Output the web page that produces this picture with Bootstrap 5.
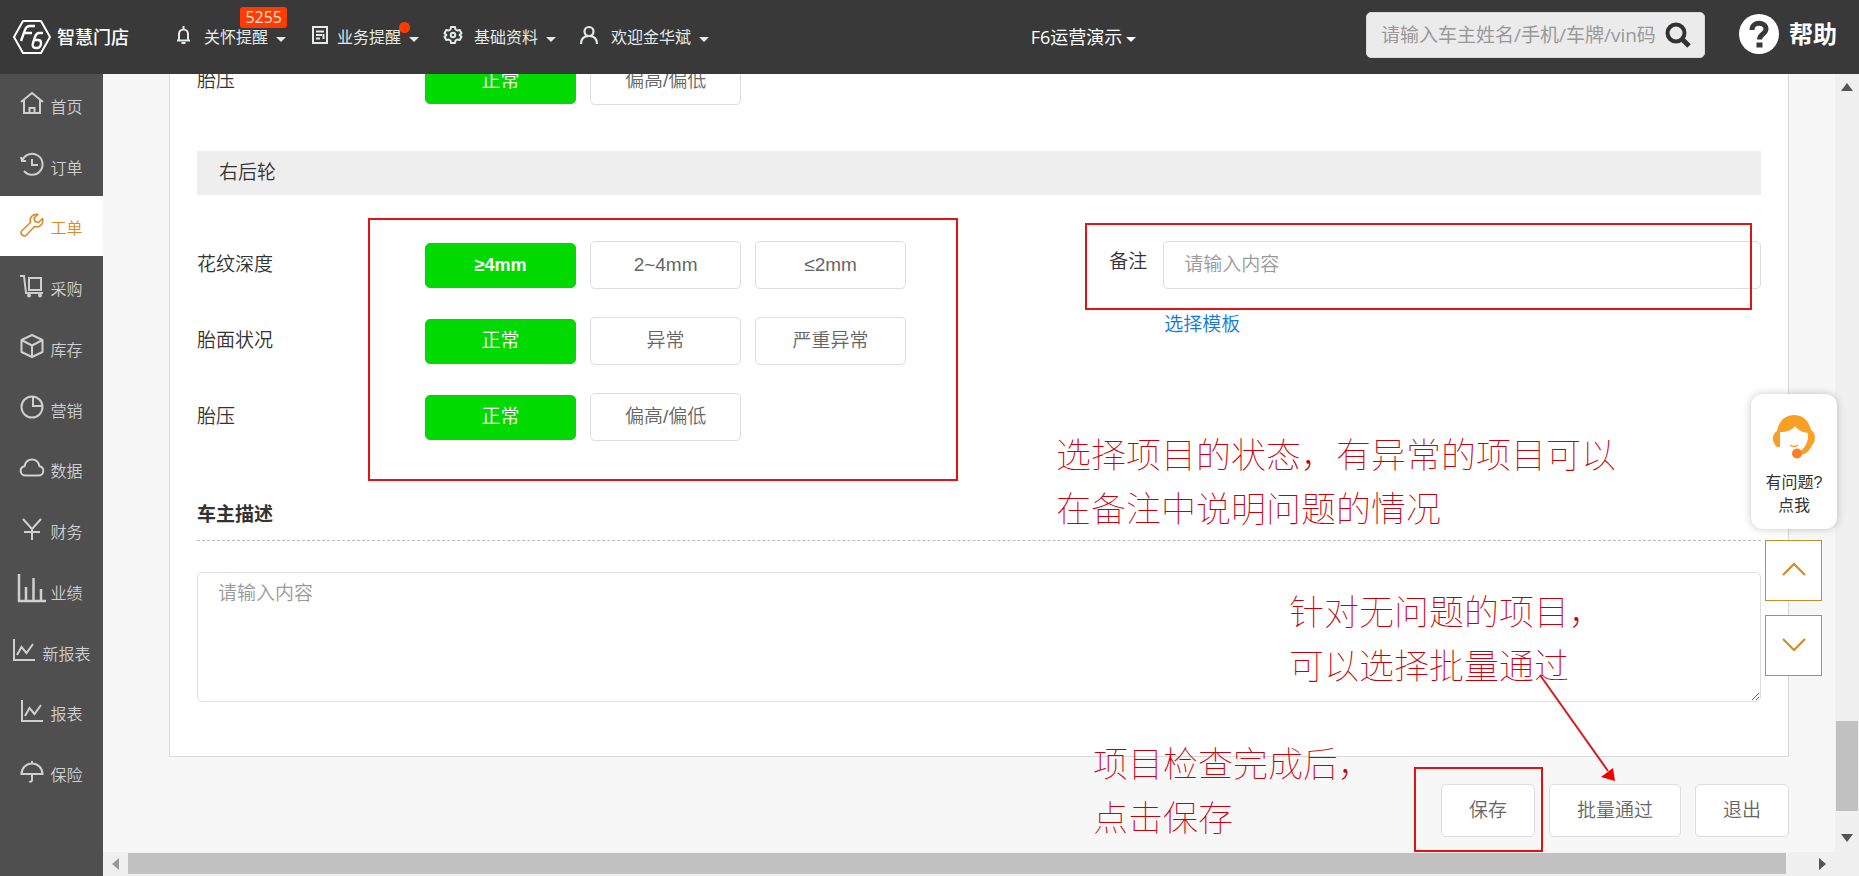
<!DOCTYPE html>
<html lang="zh-CN">
<head>
<meta charset="utf-8">
<meta name="viewport" content="width=device-width, initial-scale=1">
<title>智慧门店 - 工单</title>
<link rel="stylesheet" href="https://cdn.jsdelivr.net/npm/bootstrap@5.3.0/dist/css/bootstrap.min.css">
<style>
  body { font-family: "Liberation Sans", "Noto Sans CJK SC", sans-serif; font-size: 19px; font-weight: 350; line-height: 28px; color: #333; background: #f7f7f7; }
  input, textarea, button, .btn { font-weight: 350; }
  svg { fill: none; stroke: currentColor; overflow: visible; flex: none; }

  /* top bar */
  .topbar { height: 74px; background: #393939; color: #fff; font-family: "Open Sans", "Noto Sans CJK SC", sans-serif; font-weight: 400; padding: 0 22px 0 13px; }
  .brand { width: 162px; font-size: 18px; font-weight: 500; gap: 6px; }
  .topmenu { font-size: 16px; line-height: 24px; color: #e3ebe8; }
  .topmenu a, .shop a { color: inherit; text-decoration: none; }
  .topmenu a { margin-right: 26px; }
  .topmenu a:last-child { margin-right: 0; }
  .topmenu .ico { margin: 0 9px 4px 0; }
  .drop-caret { border: 5px solid transparent; border-top-color: currentColor; border-bottom: 0; margin: 4px 0 0 8px; }
  .shop { font-size: 18px; padding-left: 92px; }
  .shop .drop-caret { margin-left: 4px; }
  .count-tag { position: absolute; right: -1px; top: -18px; height: 21px; padding: 0 5px; border-radius: 3px; background: #ff3c00; font-size: 16px; line-height: 21px; color: #ffe3d8; }
  .dot-tag { position: absolute; right: 9px; top: -3px; width: 11px; height: 11px; border-radius: 50%; background: #ff3c00; }
  .searchbox { width: 339px; height: 46px; background: #ebebeb; border: 1px solid #d8d8d8; border-radius: 5px; padding: 0 13px 0 14px; margin-right: 34px; }
  .searchbox input { font-size: 19px; font-weight: 400; color: #333; outline: 0; min-width: 0; }
  .searchbox input::placeholder { color: #999; opacity: 1; }
  .searchbox button { color: #333; }
  .help { font-size: 24px; color: #fff; gap: 10px; padding-bottom: 6px; }

  /* side menu */
  .side { width: 103px; background: #4f4f4f; padding-bottom: 73px; }
  .side a { gap: 6px; padding: 7px 0 0; color: #cfcfcf; font-size: 16px; line-height: 24px; text-decoration: none; }
  .side svg { width: 24px; height: 24px; stroke-width: 2; margin-bottom: 9px; }
  .side a.active { background: #fff; color: #dd8a26; }

  /* form */
  .sheet { background: #fff; border: 1px solid #d9d9d9; padding: 0 27px 54px; margin: 0 46px 0 66px; }
  .group-bar { background: #eee; line-height: 44px; height: 44px; padding-left: 22px; margin: 46px 0; }
  .lines { gap: 28px; }
  .opts { gap: 14px; }
  .opt, .act { font-size: 19px; line-height: 28px; color: #666; background: #fff; border: 1px solid #ddd; border-radius: 5px; }
  .opt { width: 151px; height: 48px; padding: 9px 0; }
  .btn-check:checked + .opt { height: 45px; padding: 7px 0; background: #00da00; border-color: #00da00; color: #fff; }
  .opt.strong { font-weight: 700; font-size: 18px; }
  .act { height: 53px; padding: 0 27px; }
  .acts { gap: 14px; padding: 27px 46px 15px 0; }
  .note-label { width: 54px; padding-top: 7px; }
  .field { font-size: 19px; line-height: 28px; border: 1px solid #ddd; border-radius: 5px; padding: 9px 20px; color: #333; }
  .field::placeholder { color: #999; opacity: 1; }
  textarea.field { height: 130px; padding-top: 7px; margin-top: 31px; }
  .tpl { color: #1479d7; text-decoration: none; margin: 22px 0 0 55px; }
  .sub-title { font-size: 19px; line-height: 28px; font-weight: 700; margin: 60px 0 0; padding-bottom: 11px; border-bottom: 1px dashed #bbb; }

  /* scroll bars of the inner frame */
  .vbar { width: 24px; background: #f0f0f0; padding: 9px 1px 10px; }
  .vbar i { width: 22px; height: 90px; background: #c1c1c1; margin-bottom: 23px; }
  .hbar { height: 24px; background: #f0f0f0; padding: 0 33px 0 9px; gap: 9px; }
  .hbar i { height: 21px; background: #c1c1c1; margin-right: 24px; margin-bottom: 1px; }
  .tri { fill: #555; stroke: none; }

  /* floating tools */
  .support { position: absolute; right: 22px; bottom: 347px; width: 86px; height: 135px; border-radius: 12px; background: #fff; box-shadow: 0 0 8px rgba(0,0,0,.22); font-size: 16px; font-weight: 400; line-height: 23px; color: #333; text-decoration: none; padding-bottom: 12px; }
  .jump { position: absolute; right: 37px; bottom: 200px; gap: 14px; }
  .jump button { width: 57px; height: 61px; padding: 0 0 4px; background: #fff; border: 1px solid #c58d22; color: #cf8a22; }

  /* tutorial marks drawn over the page */
  .frame-mark { position: absolute; border: 2px solid #e11414; pointer-events: none; }
  .m-opts { left: 265px; bottom: 395px; width: 590px; height: 263px; }
  .m-note { right: 107px; bottom: 566px; width: 667px; height: 87px; }
  .m-save { right: 316px; bottom: 24px; width: 129px; height: 85px; }
  .tip-text { position: absolute; margin: 0; font-family: "Noto Sans CJK SC", sans-serif; font-weight: 100; font-size: 35px; line-height: 54px; color: #c4000c; white-space: nowrap; pointer-events: none; }
  .t-state { right: 233px; bottom: 342px; width: 570px; }
  .t-batch { right: 260px; bottom: 185px; width: 310px; }
  .t-save { right: 486px; bottom: 33px; width: 280px; }
  .arrow-mark { position: absolute; right: 239px; bottom: 91px; pointer-events: none; }
</style>
</head>
<body class="vh-100 d-flex flex-column overflow-hidden">

<header class="topbar d-flex align-items-center flex-shrink-0">
  <div class="brand d-flex align-items-center flex-shrink-0">
    <svg width="38" height="34" viewBox="0 0 38 34" stroke-width="2" stroke-linejoin="round" aria-hidden="true">
      <path d="M10 1h18l9 16-9 16H10L1 17z"/>
      <path d="M22 6h-5c-3 0-4 1-5 4L8 21M12 13h7M30 13h-4c-2 0-3 1-4 4l-2 6c-1 3 0 5 3 5h1c3 0 4-3 4-5s-1-3-3-3h-4" stroke-width="2.4"/>
    </svg>
    <span>智慧门店</span>
  </div>
  <nav class="topmenu d-flex align-items-center flex-shrink-0">
    <a href="#" class="d-flex align-items-center position-relative">
      <svg class="ico" width="20" height="18" viewBox="-1 0 20 18" stroke-width="2"><path d="M1 14.500h13M3 14V8a4.500 4.500 0 0 1 9 0v6M7.500 3V0M5.500 17h4"/></svg>
      <span>关怀提醒</span><span class="drop-caret"></span><span class="count-tag">5255</span>
    </a>
    <a href="#" class="d-flex align-items-center position-relative">
      <svg class="ico" width="16" height="18" viewBox="0 0 16 18" stroke-width="2"><path d="M1 1h14v16H1zM4 5.500h8M4 9h6M4 12.500h4M11.500 8v5"/></svg>
      <span>业务提醒</span><span class="drop-caret"></span><span class="dot-tag"></span>
    </a>
    <a href="#" class="d-flex align-items-center">
      <svg class="ico" width="20" height="18" viewBox="1 0 20 18" stroke-width="2" stroke-linejoin="round"><path d="M7 1h4l.5 2.500 1.700 1L15.700 4l1.800 3.200L15.600 9l1.900 1.800-1.800 3.200-2.500-.5-1.700 1L11 17H7l-.5-2.500-1.700-1-2.500.5L.5 10.800 2.400 9 .5 7.200 2.300 4l2.500.5 1.700-1z"/><circle cx="9" cy="9" r="2.200"/></svg>
      <span>基础资料</span><span class="drop-caret"></span>
    </a>
    <a href="#" class="d-flex align-items-center">
      <svg class="ico" width="20" height="18" viewBox="1 0 20 18" stroke-width="2.200"><circle cx="8" cy="5.500" r="4.500"/><path d="M0 18c0-5 3-8 8-8s8 3 8 8"/></svg>
      <span>欢迎金华斌</span><span class="drop-caret"></span>
    </a>
  </nav>
  <div class="shop flex-fill d-flex justify-content-center"><a href="#" class="d-flex align-items-center">F6运营演示<span class="drop-caret"></span></a></div>
  <form class="searchbox d-flex align-items-center flex-shrink-0 mb-1">
    <input type="text" class="border-0 bg-transparent p-0 flex-fill" placeholder="请输入车主姓名/手机/车牌/vin码" aria-label="搜索">
    <button type="button" class="border-0 bg-transparent p-0 d-flex" aria-label="查询">
      <svg width="26" height="26" viewBox="0 0 26 26" stroke-width="4"><circle cx="11" cy="11" r="8.500"/><path d="M17 17l7 7" stroke-width="5"/></svg>
    </button>
  </form>
  <a href="#" class="help d-flex align-items-center fw-bold text-decoration-none flex-shrink-0">
    <svg width="40" height="40" viewBox="0 0 40 40"><circle cx="20" cy="20" r="20" fill="#fff" stroke="none"/><path d="M13 16c0-9 14-8.500 14-1 0 5-6.500 5-6.500 10.500" stroke="#393939" stroke-width="5"/><path d="M17.500 28.500h6v5h-6z" fill="#393939" stroke="none"/></svg>
    <span>帮助</span>
  </a>
</header>

<div class="d-flex flex-fill overflow-hidden">
  <nav class="side d-flex flex-column flex-shrink-0">
    <a href="#" class="d-flex flex-fill align-items-center justify-content-center"><svg viewBox="0 0 24 24"><path d="M1 11L12 2l11 9M4 9v13h16V9M9.500 22v-5h5v5"/></svg>首页</a>
    <a href="#" class="d-flex flex-fill align-items-center justify-content-center"><svg viewBox="0 0 24 24"><path d="M2.500 8A10.500 10.500 0 1 1 4 19M1 5l1 4h4M12 7v6h6"/></svg>订单</a>
    <a href="#" class="active d-flex flex-fill align-items-center justify-content-center"><svg viewBox="0 0 24 24" stroke-linejoin="round"><path stroke-width="1.600" d="M18 1.500c-5-1-9 3-7.500 8L1.500 18c-1.500 3 1.500 6 4.500 4.500l8.500-9c5 1.500 9.500-2.500 8-8l-4 4-3.500-1-1-3.500z"/></svg>工单</a>
    <a href="#" class="d-flex flex-fill align-items-center justify-content-center"><svg viewBox="0 0 24 24"><path d="M0 2h4l2 17h17M9 4h12v12H9z"/><circle cx="9" cy="21.500" r="1"/><circle cx="20" cy="21.500" r="1"/></svg>采购</a>
    <a href="#" class="d-flex flex-fill align-items-center justify-content-center"><svg viewBox="0 0 24 24" stroke-linejoin="round"><path d="M12 1l10.500 5v12L12 23 1.500 18V6zM1.500 6L12 11.500 22.500 6M12 11.500V23"/></svg>库存</a>
    <a href="#" class="d-flex flex-fill align-items-center justify-content-center"><svg viewBox="0 0 24 24"><circle cx="12" cy="12" r="10.500"/><path d="M13 2v9h9"/></svg>营销</a>
    <a href="#" class="d-flex flex-fill align-items-center justify-content-center"><svg viewBox="0 0 24 24"><path d="M5 19.500a4.700 4.700 0 0 1-.5-9.300C5.500 6 8.500 3.500 12 3.500s6.500 2.500 7.500 6.700a4.700 4.700 0 0 1-.5 9.300z"/></svg>数据</a>
    <a href="#" class="d-flex flex-fill align-items-center justify-content-center"><svg viewBox="0 0 24 24"><path d="M3 2l9 10 9-10M12 12v11M4 15h16"/></svg>财务</a>
    <a href="#" class="d-flex flex-fill align-items-center justify-content-center"><svg viewBox="0 0 24 24"><path d="M-1-3v27h27M6 23V10M13.500 23V1M21 23V12" stroke-width="2.500"/></svg>业绩</a>
    <a href="#" class="d-flex flex-fill align-items-center justify-content-center"><svg viewBox="0 0 24 24"><path d="M2 1v21h21M5 17l4.500-8 5 6L21 6"/></svg>新报表</a>
    <a href="#" class="d-flex flex-fill align-items-center justify-content-center"><svg viewBox="0 0 24 24"><path d="M2 1v21h21M5 17l4.500-8 5 6L21 6"/></svg>报表</a>
    <a href="#" class="d-flex flex-fill align-items-center justify-content-center"><svg viewBox="0 0 24 24"><path d="M1.500 14a10.500 10.500 0 0 1 21 0zM12 3.500V1M12 14v6c0 2-2 2-2.500 1"/></svg>保险</a>
  </nav>

  <main class="flex-fill d-flex flex-column position-relative overflow-hidden">
    <div class="d-flex flex-fill overflow-hidden">
      <div class="flex-fill d-flex flex-column justify-content-end overflow-hidden">
        <form id="check" class="sheet">
          <div class="row g-0">
            <div class="col-7"><div class="row g-0 align-items-center">
              <div class="col-3">胎压</div>
              <div class="col-9 d-flex opts align-items-center" role="group" aria-label="胎压">
                <input class="btn-check" type="radio" name="p0" id="p0a" checked><label class="btn opt" for="p0a">正常</label>
                <input class="btn-check" type="radio" name="p0" id="p0b"><label class="btn opt" for="p0b">偏高/偏低</label>
              </div>
            </div></div>
          </div>
          <div class="group-bar">右后轮</div>
          <div class="row g-0">
            <div class="col-7 d-flex flex-column lines">
              <div class="row g-0 align-items-center">
                <div class="col-3">花纹深度</div>
                <div class="col-9 d-flex opts align-items-center" role="group" aria-label="花纹深度">
                  <input class="btn-check" type="radio" name="d" id="d1" checked><label class="btn opt strong" for="d1">≥4mm</label>
                  <input class="btn-check" type="radio" name="d" id="d2"><label class="btn opt" for="d2">2~4mm</label>
                  <input class="btn-check" type="radio" name="d" id="d3"><label class="btn opt" for="d3">≤2mm</label>
                </div>
              </div>
              <div class="row g-0 align-items-center">
                <div class="col-3">胎面状况</div>
                <div class="col-9 d-flex opts align-items-center" role="group" aria-label="胎面状况">
                  <input class="btn-check" type="radio" name="s" id="s1" checked><label class="btn opt" for="s1">正常</label>
                  <input class="btn-check" type="radio" name="s" id="s2"><label class="btn opt" for="s2">异常</label>
                  <input class="btn-check" type="radio" name="s" id="s3"><label class="btn opt" for="s3">严重异常</label>
                </div>
              </div>
              <div class="row g-0 align-items-center">
                <div class="col-3">胎压</div>
                <div class="col-9 d-flex opts align-items-center" role="group" aria-label="胎压">
                  <input class="btn-check" type="radio" name="p" id="p1" checked><label class="btn opt" for="p1">正常</label>
                  <input class="btn-check" type="radio" name="p" id="p2"><label class="btn opt" for="p2">偏高/偏低</label>
                </div>
              </div>
            </div>
            <div class="col-5">
              <div class="d-flex">
                <label class="note-label flex-shrink-0" for="note">备注</label>
                <input id="note" type="text" class="field flex-fill" placeholder="请输入内容">
              </div>
              <a href="#" class="tpl d-inline-block">选择模板</a>
            </div>
          </div>
          <h2 class="sub-title"><label for="desc">车主描述</label></h2>
          <textarea id="desc" class="field w-100 d-block" placeholder="请输入内容"></textarea>
        </form>
        <div class="acts d-flex justify-content-end">
          <button type="submit" form="check" class="btn act">保存</button>
          <button type="button" class="btn act">批量通过</button>
          <button type="button" class="btn act">退出</button>
        </div>
      </div>
      <div class="vbar d-flex flex-column align-items-center flex-shrink-0" aria-hidden="true">
        <svg class="tri mb-auto" width="12" height="8" viewBox="0 0 12 8"><path d="M6 0l6 8H0z"/></svg>
        <i></i>
        <svg class="tri" width="12" height="8" viewBox="0 0 12 8"><path d="M6 8L0 0h12z"/></svg>
      </div>
    </div>
    <div class="hbar d-flex align-items-center flex-shrink-0" aria-hidden="true">
      <svg class="tri" width="7" height="12" viewBox="0 0 7 12"><path d="M0 6l7-6v12z" fill="#999"/></svg>
      <i class="flex-fill"></i>
      <svg class="tri" width="7" height="12" viewBox="0 0 7 12"><path d="M7 6L0 0v12z"/></svg>
    </div>

    <a href="#" class="support d-flex flex-column align-items-center justify-content-end text-center">
      <svg class="mb-2 pb-1" width="44" height="48" viewBox="0 0 44 44" aria-hidden="true">
        <path d="M5 16C7 5 14 0 22 0s15 5 17 15c5 2 5 12 1 15-2 6-7 10-13 10" fill="#f9a024" stroke="none"/>
        <path d="M5 16c-5 3-6 11 0 16h3V16z" fill="#f9a024" stroke="none"/>
        <path d="M8 17c7 0 12-2 15-6 3 4 7 6 13 7 1 10-5 20-14 20S7 30 8 17z" fill="#fff" stroke="none"/>
        <path d="M18 30q4 3 8 0" stroke="#f9a024" stroke-width="1.500"/>
        <path d="M39 28c-2 6-6 10-13 11" stroke="#f9a024" stroke-width="2"/>
        <circle cx="25" cy="38.500" r="5" fill="#ff7d26" stroke="none"/>
      </svg>
      <span>有问题?<br>点我</span>
    </a>
    <div class="jump d-flex flex-column">
      <button type="button" aria-label="上"><svg width="24" height="13" viewBox="0 0 24 13" stroke-width="2"><path d="M1 12L12 1l11 11"/></svg></button>
      <button type="button" aria-label="下"><svg width="24" height="13" viewBox="0 0 24 13" stroke-width="2"><path d="M1 1l11 11L23 1"/></svg></button>
    </div>

    <div class="frame-mark m-opts"></div>
    <div class="frame-mark m-note"></div>
    <div class="frame-mark m-save"></div>
    <p class="tip-text t-state">选择项目的状态，有异常的项目可以<br>在备注中说明问题的情况</p>
    <p class="tip-text t-batch">针对无问题的项目，<br>可以选择批量通过</p>
    <p class="tip-text t-save">项目检查完成后，<br>点击保存</p>
    <svg class="arrow-mark" width="85" height="115" viewBox="0 0 85 115" aria-hidden="true"><path d="M5 5l68 96" stroke="#d81a1a" stroke-width="2"/><path d="M66 107l12-9 2 13z" fill="#f00000" stroke="none"/></svg>
  </main>
</div>

<script src="https://cdn.jsdelivr.net/npm/bootstrap@5.3.0/dist/js/bootstrap.bundle.min.js"></script>
</body>
</html>
